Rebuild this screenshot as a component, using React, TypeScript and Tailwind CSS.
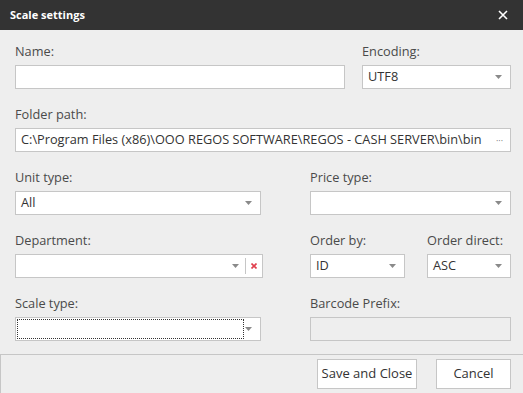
const FONT = { fontFamily: '"Segoe UI", "Open Sans", "Noto Sans", sans-serif' }

function Arrow() {
  return (
    <svg width="7" height="4" viewBox="0 0 7 4" className="shrink-0">
      <path d="M0 0h7L3.5 4z" fill="#8a8a8a" />
    </svg>
  )
}

function Label({ children }: { children: React.ReactNode }) {
  return <div className="mb-[6px] h-4 text-[12.75px] leading-4 text-[#4a4a4a]">{children}</div>
}

function Combo({ value, className = '' }: { value?: string; className?: string }) {
  return (
    <div className={`flex h-6 items-center border border-[#c6c6c6] bg-white pl-[5px] pr-[8px] ${className}`}>
      <span className="flex-1 text-[12.75px] text-[#333]">{value}</span>
      <Arrow />
    </div>
  )
}

export default function App() {
  return (
    <div className="flex h-[393px] w-[523px] flex-col bg-[#eeeeee]" style={FONT}>
      {/* title */}
      <div className="flex h-[30px] items-center justify-between bg-[#333333] pl-[10px] pr-[15px]">
        <span className="text-[11px] font-bold text-white">Scale settings</span>
        <svg width="10" height="10" viewBox="0 0 10 10">
          <path d="M1 1l8 8M9 1l-8 8" stroke="#fff" strokeWidth="1.6" />
        </svg>
      </div>

      <div className="flex flex-1 flex-col gap-[17px] pl-[15px] pr-[12px] pt-[13px]">
        <div className="flex">
          <div className="w-[330px]">
            <Label>Name:</Label>
            <div className="h-6 border border-[#c6c6c6] bg-white" />
          </div>
          <div className="ml-[17px] flex-1">
            <Label>Encoding:</Label>
            <Combo value="UTF8" />
          </div>
        </div>

        <div>
          <Label>Folder path:</Label>
          <div className="flex h-6 items-center border border-[#c6c6c6] bg-white pl-[5px] pr-[7px]">
            <span className="flex-1 whitespace-nowrap text-[12.75px] text-[#333]">
              C:\Program Files (x86)\OOO REGOS SOFTWARE\REGOS - CASH SERVER\bin\bin
            </span>
            <span className="text-[9px] leading-none text-[#777]">···</span>
          </div>
        </div>

        <div className="flex">
          <div className="w-[246px]">
            <Label>Unit type:</Label>
            <Combo value="All" />
          </div>
          <div className="ml-[49px] flex-1">
            <Label>Price type:</Label>
            <Combo />
          </div>
        </div>

        <div className="flex">
          <div className="w-[248px]">
            <Label>Department:</Label>
            <div className="flex h-6 items-center border border-[#c6c6c6] bg-white">
              <div className="flex-1" />
              <Arrow />
              <div className="ml-[6px] h-[16px] w-px bg-[#c6c6c6]" />
              <svg width="6" height="6" viewBox="0 0 6 6" className="mx-[5px]">
                <path d="M0.5 0.5l5 5M5.5 0.5l-5 5" stroke="#e0404e" strokeWidth="1.6" />
              </svg>
            </div>
          </div>
          <div className="ml-[47px] w-[95px]">
            <Label>Order by:</Label>
            <Combo value="ID" />
          </div>
          <div className="ml-[22px] flex-1">
            <Label>Order direct:</Label>
            <Combo value="ASC" />
          </div>
        </div>

        <div className="flex">
          <div className="w-[246px]">
            <Label>Scale type:</Label>
            <div className="flex h-6 items-center border border-[#c6c6c6] bg-white p-px pr-[8px]">
              <div className="h-full w-[227px] border border-dotted border-[#333]" />
              <div className="flex-1" />
              <Arrow />
            </div>
          </div>
          <div className="ml-[49px] flex-1">
            <Label>Barcode Prefix:</Label>
            <div className="h-6 border border-[#c6c6c6] bg-[#eeeeee]" />
          </div>
        </div>
      </div>

      {/* footer */}
      <div className="flex h-[39px] items-start justify-end gap-[19px] border-l border-t border-[#c6c6c6] pr-[12px] pt-[4px]">
        <button className="h-[30px] w-[100px] border border-[#c6c6c6] bg-white text-[13px] text-[#333]">
          Save and Close
        </button>
        <button className="h-[30px] w-[75px] border border-[#c6c6c6] bg-white text-[13px] text-[#333]">
          Cancel
        </button>
      </div>
    </div>
  )
}
